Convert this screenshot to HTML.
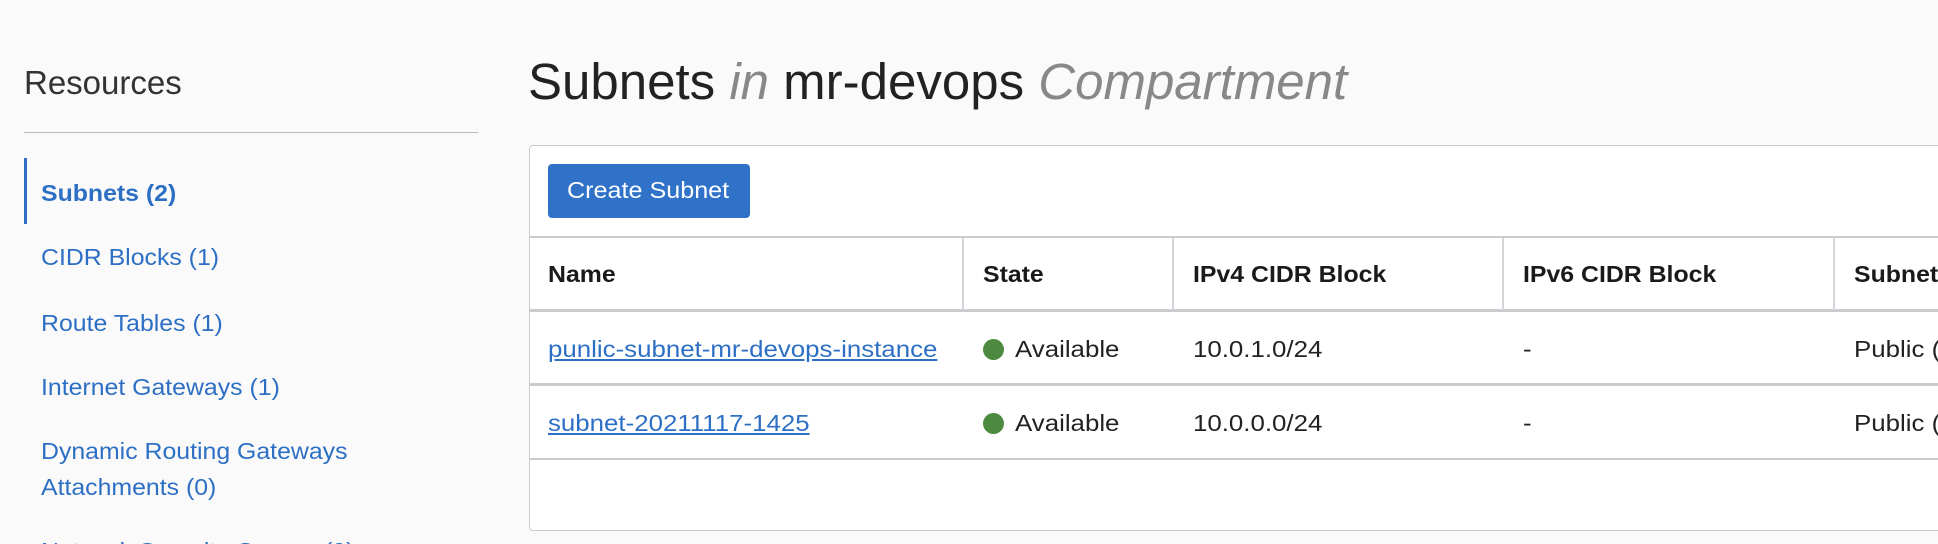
<!DOCTYPE html>
<html style="overflow:hidden;width:1938px;height:544px"><head><style>
body{margin:0;width:1938px;height:544px;overflow:hidden;background:#fafafa;font-family:"Liberation Sans",sans-serif}
#w{position:relative;width:1938px;height:544px;overflow:hidden}
.a{position:absolute;white-space:nowrap;transform-origin:0 50%}
.nav{color:#2d6fc4;font-size:23px;left:41px;transform:scaleX(1.08)}
.th{font-weight:bold;font-size:23px;color:#1a1a1a;top:261px;transform:scaleX(1.08)}
.td{font-size:23.5px;color:#222;transform:scaleX(1.10)}
a{color:#2d6fc4;text-decoration:underline}
.dot{position:absolute;width:21px;height:21px;border-radius:50%;background:#4c8a3f}
.vl{position:absolute;top:238px;width:2px;height:72px;background:#d3d5d8}
.hl{position:absolute;left:530px;right:0;height:2px;background:#c9cbce}
</style></head><body><div id="w">
<div class="a" style="left:24px;top:64px;font-size:33px;color:#333;font-weight:300">Resources</div>
<div style="position:absolute;left:24px;top:132px;width:454px;height:1px;background:#b9bcc0"></div>
<div style="position:absolute;left:24px;top:158px;width:3px;height:66px;background:#2d6fc4"></div>
<div class="a nav" style="top:180px;font-weight:bold">Subnets (2)</div>
<div class="a nav" style="top:244px">CIDR Blocks (1)</div>
<div class="a nav" style="top:310px">Route Tables (1)</div>
<div class="a nav" style="top:374px">Internet Gateways (1)</div>
<div class="a nav" style="top:438px">Dynamic Routing Gateways</div>
<div class="a nav" style="top:474px">Attachments (0)</div>
<div class="a nav" style="top:538px">Network Security Groups (0)</div>
<div class="a" style="left:528px;top:52px;font-size:51px;color:#222">Subnets <i style="color:#888">in</i> mr-devops <i style="color:#888">Compartment</i></div>
<div style="position:absolute;left:529px;top:145px;width:1420px;height:386px;background:#fff;border:1px solid #c9cbce;border-radius:4px;box-sizing:border-box"></div>
<div style="position:absolute;left:548px;top:164px;width:202px;height:54px;background:#2f72c8;border-radius:4px"></div>
<div class="a" style="left:567px;top:177px;color:#fff;font-size:23.5px;transform:scaleX(1.07)">Create Subnet</div>
<div class="hl" style="top:236px"></div>
<div class="hl" style="top:309px;height:3px"></div>
<div class="hl" style="top:383px;height:3px"></div>
<div class="hl" style="top:458px"></div>
<div class="vl" style="left:962px"></div><div class="vl" style="left:1172px"></div><div class="vl" style="left:1502px"></div><div class="vl" style="left:1833px"></div>
<div class="a th" style="left:548px">Name</div>
<div class="a th" style="left:983px">State</div>
<div class="a th" style="left:1193px">IPv4 CIDR Block</div>
<div class="a th" style="left:1523px">IPv6 CIDR Block</div>
<div class="a th" style="left:1854px">Subnet Access</div>
<div class="a td" style="left:548px;top:336px"><a>punlic-subnet-mr-devops-instance</a></div>
<div class="dot" style="left:983px;top:339px"></div>
<div class="a td" style="left:1015px;top:336px">Available</div>
<div class="a td" style="left:1193px;top:336px">10.0.1.0/24</div>
<div class="a td" style="left:1523px;top:336px">-</div>
<div class="a td" style="left:1854px;top:336px">Public (Regional)</div>
<div class="a td" style="left:548px;top:410px"><a>subnet-20211117-1425</a></div>
<div class="dot" style="left:983px;top:413px"></div>
<div class="a td" style="left:1015px;top:410px">Available</div>
<div class="a td" style="left:1193px;top:410px">10.0.0.0/24</div>
<div class="a td" style="left:1523px;top:410px">-</div>
<div class="a td" style="left:1854px;top:410px">Public (Regional)</div>
</div></body></html>
